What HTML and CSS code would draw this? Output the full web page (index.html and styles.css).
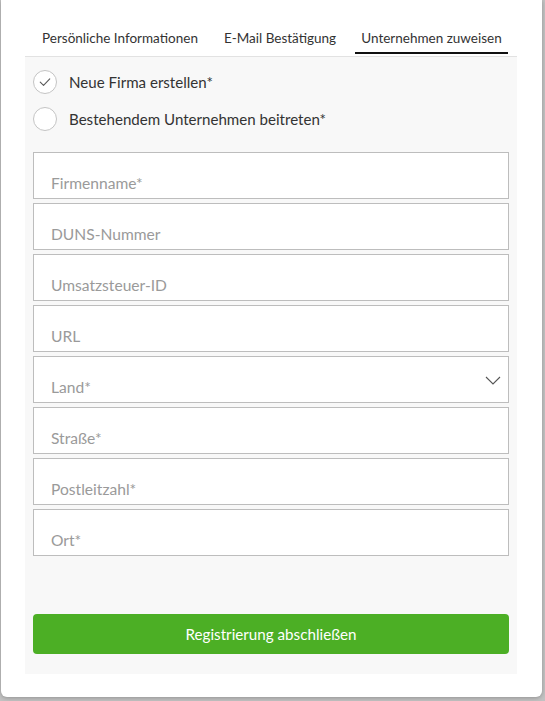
FILE: index.html
```html
<!DOCTYPE html>
<html lang="de">
<head>
<meta charset="utf-8">
<title>Registrierung</title>
<link rel="stylesheet" href="styles.css">
</head>
<body>
<div class="modal">
  <nav class="tabs">
    <div class="tab tab-1">Persönliche Informationen</div>
    <div class="tab tab-2">E-Mail Bestätigung</div>
    <div class="tab tab-3 active">Unternehmen zuweisen</div>
  </nav>
  <div class="panel">
    <div class="radios">
      <label class="radio">
        <span class="circle">
          <svg viewBox="0 0 24 24" width="24" height="24"><polyline points="6.8,12.2 10.4,15.8 17.2,8.6" fill="none" stroke="#5a5a5a" stroke-width="1.2" stroke-linecap="round" stroke-linejoin="round"/></svg>
        </span>
        <span class="radio-label">Neue Firma erstellen*</span>
      </label>
      <label class="radio">
        <span class="circle"></span>
        <span class="radio-label">Bestehendem Unternehmen beitreten*</span>
      </label>
    </div>
    <div class="fields">
      <input class="field" type="text" placeholder="Firmenname*">
      <input class="field" type="text" placeholder="DUNS-Nummer">
      <input class="field" type="text" placeholder="Umsatzsteuer-ID">
      <input class="field" type="text" placeholder="URL">
      <div class="select">
        <input class="field" type="text" placeholder="Land*">
        <svg class="chevron" viewBox="0 0 16 9" width="16" height="9"><polyline points="1,1 8,8 15,1" fill="none" stroke="#555" stroke-width="1.1"/></svg>
      </div>
      <input class="field" type="text" placeholder="Straße*">
      <input class="field" type="text" placeholder="Postleitzahl*">
      <input class="field" type="text" placeholder="Ort*">
    </div>
    <button class="submit" type="button">Registrierung abschließen</button>
  </div>
</div>
</body>
</html>
```

FILE: styles.css
```css
html, body {
  margin: 0;
  padding: 0;
}
body {
  background: #c2c2c2;
  width: 545px;
  height: 701px;
  overflow: hidden;
  font-family: "Lato", "Liberation Sans", sans-serif;
  color: #333;
}
.modal {
  margin-left: 1px;
  width: 541px;
  box-sizing: border-box;
  background: #fff;
  border-radius: 0 0 6px 6px;
  padding: 24px 25px 23px 24px;
  box-shadow: 0 1px 4px rgba(0,0,0,0.25);
}
.tabs {
  display: flex;
  gap: 14px;
  padding-left: 10px;
  height: 30px;
  margin-bottom: 2px;
}
.tab {
  box-sizing: border-box;
  text-align: center;
  font-size: 13.5px;
  color: #333;
  padding-top: 6px;
  height: 30px;
  white-space: nowrap;
}
.tab-1 { width: 170px; }
.tab-2 { width: 122px; }
.tab-3 { width: 153px; }
.tab.active {
  border-bottom: 2px solid #111;
}
.panel {
  background: #f8f8f8;
  border-top: 1px solid #e2e2e2;
  padding: 13px 7px 20px 8px;
}
.radios {
  display: flex;
  flex-direction: column;
  gap: 13px;
}
.radio {
  display: flex;
  align-items: center;
  height: 24px;
}
.circle {
  width: 24px;
  height: 24px;
  box-sizing: border-box;
  border: 1px solid #c4c4c4;
  border-radius: 50%;
  background: #fff;
  display: flex;
  align-items: center;
  justify-content: center;
  flex: none;
}
.circle svg {
  display: block;
}
.radio-label {
  margin-left: 12px;
  font-size: 15.1px;
  color: #333;
}
.fields {
  margin-top: 21px;
  display: flex;
  flex-direction: column;
  gap: 4px;
}
.field {
  display: block;
  width: 476px;
  height: 47px;
  box-sizing: border-box;
  border: 1px solid #bdbdbd;
  border-radius: 0;
  background: #fff;
  padding: 18px 17px 3px 17px;
  margin: 0;
  font-family: "Lato", "Liberation Sans", sans-serif;
  font-size: 15.6px;
  color: #333;
  outline: none;
}
.field::placeholder {
  color: #9a9a9a;
  opacity: 1;
}
.select {
  position: relative;
}
.chevron {
  position: absolute;
  right: 9px;
  top: 20px;
}
.submit {
  display: block;
  margin-top: 58px;
  width: 476px;
  height: 40px;
  border: 0;
  border-radius: 4px;
  background: #4caf25;
  color: #fff;
  font-family: "Lato", "Liberation Sans", sans-serif;
  font-size: 15.2px;
  padding: 0;
}
```
